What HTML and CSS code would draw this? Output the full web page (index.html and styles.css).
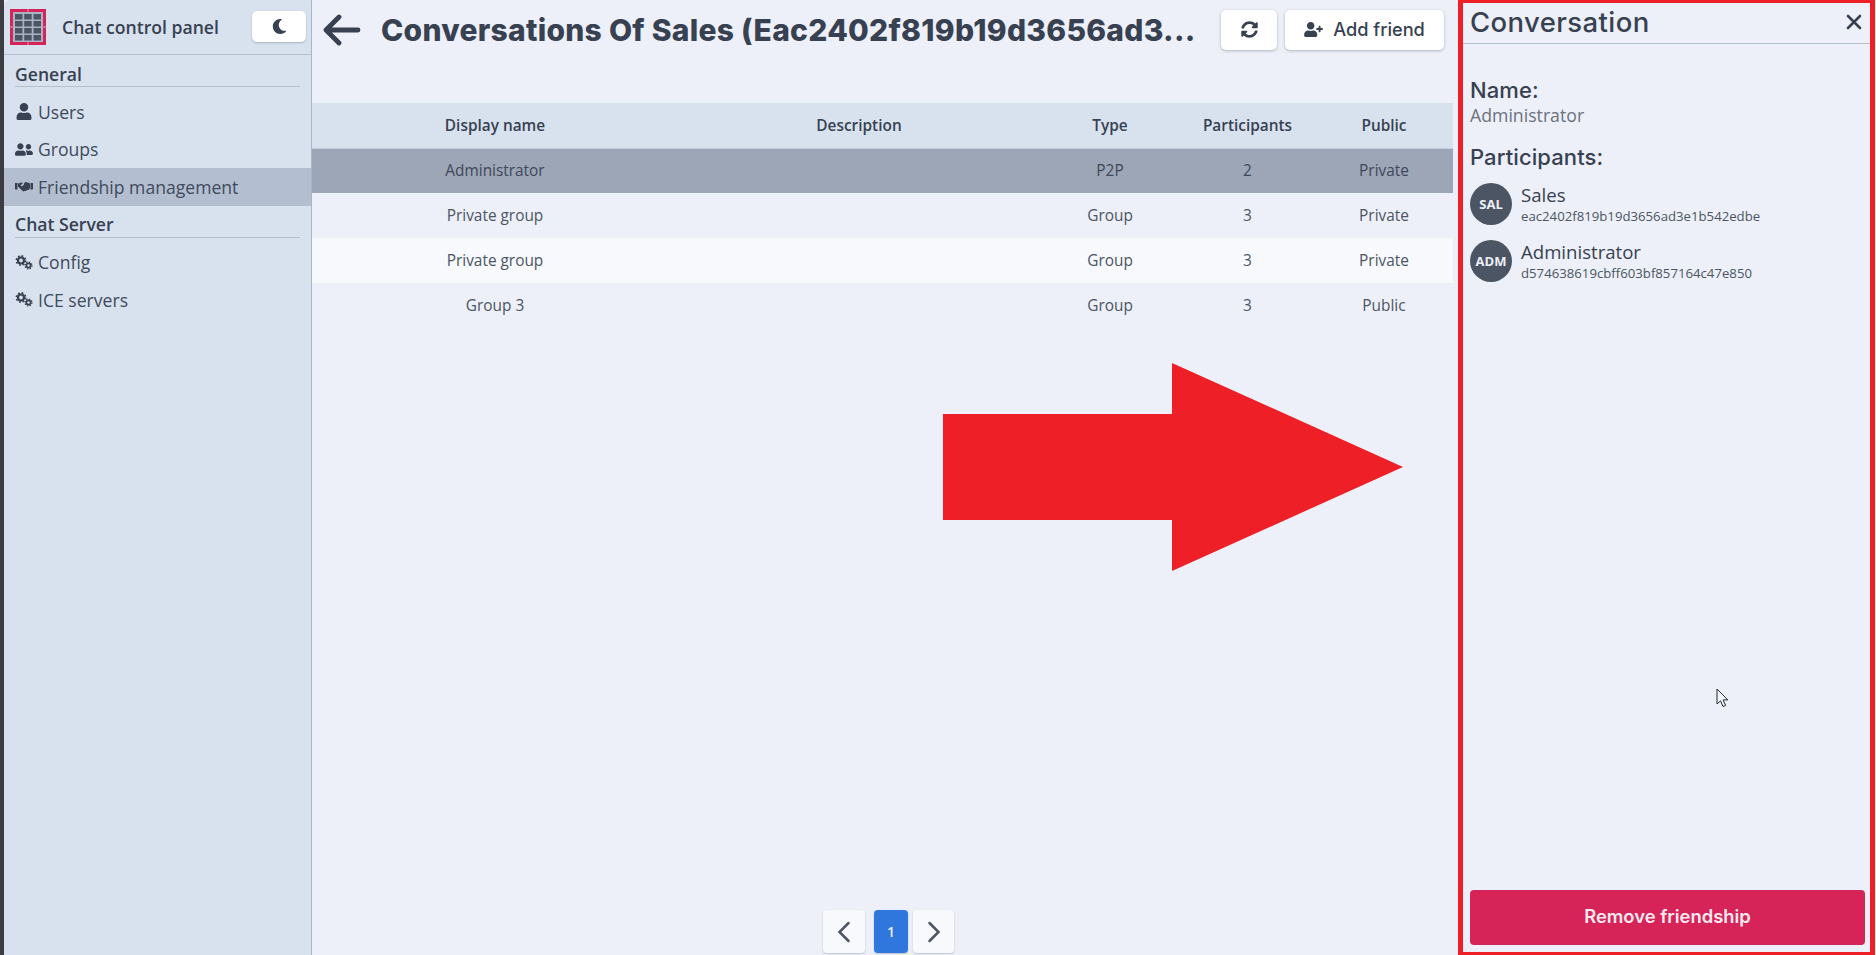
FILE: index.html
```html
<!DOCTYPE html>
<html lang="en">
<head>
<meta charset="utf-8">
<title>Chat control panel</title>
<link rel="stylesheet" href="styles.css">
</head>
<body>
<div class="app">
  <div class="strip"></div>
  <aside class="sidebar">
    <div class="brand">
      <svg class="logo" viewBox="0 0 36 36">
        <rect x="1.500" y="1.500" width="33" height="33" fill="#a9b3c4" stroke="#d62358" stroke-width="3"/>
        <path d="M18 0v3M18 33v3M0 18h3M33 18h3" stroke="#e9b9cb" stroke-width=".8"/>
        <g fill="#4b5563">
          <rect x="5" y="5" width="7.500" height="5.500"/><rect x="14.200" y="5" width="7.500" height="5.500"/><rect x="23.500" y="5" width="7.500" height="5.500"/>
          <rect x="5" y="12" width="7.500" height="5.500"/><rect x="14.200" y="12" width="7.500" height="5.500"/><rect x="23.500" y="12" width="7.500" height="5.500"/>
          <rect x="5" y="19" width="7.500" height="5.500"/><rect x="14.200" y="19" width="7.500" height="5.500"/><rect x="23.500" y="19" width="7.500" height="5.500"/>
          <rect x="5" y="26" width="7.500" height="5.500"/><rect x="14.200" y="26" width="7.500" height="5.500"/><rect x="23.500" y="26" width="7.500" height="5.500"/>
        </g>
      </svg>
      <span class="brand-name">Chat control panel</span>
      <button class="theme-btn" type="button">
        <svg class="icon-moon" viewBox="0 0 512 512"><path d="M283.211 512c78.962 0 151.079-35.925 198.857-94.792 7.068-8.708-.639-21.43-11.562-19.35-124.203 23.654-238.262-71.576-238.262-196.954 0-72.222 38.662-138.635 101.498-174.394 9.686-5.512 7.25-20.197-3.756-22.23A258.156 258.156 0 0 0 283.211 0c-141.309 0-256 114.511-256 256 0 141.309 114.511 256 256 256z"/></svg>
      </button>
    </div>
    <div class="nav-title">General</div>
    <a class="nav-item">
      <svg class="nav-icon" viewBox="0 0 448 512"><path d="M224 256c70.700 0 128-57.300 128-128S294.700 0 224 0 96 57.300 96 128s57.300 128 128 128zm89.600 32h-16.700c-22.200 10.200-46.900 16-72.900 16s-50.600-5.800-72.900-16h-16.700C60.200 288 0 348.200 0 422.400V464c0 26.500 21.500 48 48 48h352c26.500 0 48-21.500 48-48v-41.600c0-74.200-60.200-134.400-134.400-134.400z"/></svg>
      <span>Users</span>
    </a>
    <a class="nav-item">
      <svg class="nav-icon" viewBox="0 0 640 512"><path d="M192 256c61.900 0 112-50.100 112-112S253.900 32 192 32 80 82.100 80 144s50.100 112 112 112zm76.800 32h-8.300c-20.800 10-43.900 16-68.500 16s-47.600-6-68.500-16h-8.300C51.600 288 0 339.600 0 403.200V432c0 26.500 21.500 48 48 48h288c26.500 0 48-21.500 48-48v-28.800c0-63.600-51.600-115.200-115.200-115.200zM480 256c53 0 96-43 96-96s-43-96-96-96-96 43-96 96 43 96 96 96zm48 32h-3.800c-13.900 4.800-28.600 8-44.200 8s-30.300-3.200-44.200-8H432c-20.400 0-39.200 5.900-55.700 15.400 24.400 26.300 39.700 61.200 39.700 99.800v38.400c0 2.200-.5 4.300-.6 6.400H592c26.500 0 48-21.500 48-48 0-61.900-50.100-112-112-112z"/></svg>
      <span>Groups</span>
    </a>
    <a class="nav-item active">
      <svg class="nav-icon" viewBox="0 0 36 24"><path d="M0 5h5v13H0zM31 5h5v13h-5zM6 6l7-2 3 1-5 5 2 2 6-4 9 8 1 1-2 2-3 0-2 2h-3l-2 1-3-2-8-8zM19 4l4-1 7 3v10l-2 1-8-8-3 1 2-6z"/></svg>
      <span>Friendship management</span>
    </a>
    <div class="nav-title">Chat Server</div>
    <a class="nav-item">
      <svg class="nav-icon" viewBox="0 0 18 16"><g fill="none"><circle class="gear-big" cx="6" cy="6" r="3"/><circle class="gear-big-teeth" cx="6" cy="6" r="4.600"/><circle class="gear-small" cx="13.500" cy="11" r="2.100"/><circle class="gear-small-teeth" cx="13.500" cy="11" r="3.400"/></g></svg>
      <span>Config</span>
    </a>
    <a class="nav-item">
      <svg class="nav-icon" viewBox="0 0 18 16"><g fill="none"><circle class="gear-big" cx="6" cy="6" r="3"/><circle class="gear-big-teeth" cx="6" cy="6" r="4.600"/><circle class="gear-small" cx="13.500" cy="11" r="2.100"/><circle class="gear-small-teeth" cx="13.500" cy="11" r="3.400"/></g></svg>
      <span>ICE servers</span>
    </a>
  </aside>

  <main class="content">
    <header class="topbar">
      <svg class="back" viewBox="0 0 38 32"><path d="M35 16H4M16 3 3 16l13 13" fill="none" stroke="#374151" stroke-width="4.800" stroke-linecap="round" stroke-linejoin="round"/></svg>
      <h1 class="title">Conversations Of Sales (Eac2402f819b19d3656ad3...</h1>
      <button class="btn btn-icon" type="button">
        <svg class="icon-sync" viewBox="0 0 512 512"><path d="M370.720 133.280C339.458 104.008 298.888 87.962 255.848 88c-77.458.068-144.328 53.178-162.791 126.850-1.344 5.363-6.122 9.150-11.651 9.150H24.103c-7.498 0-13.194-6.807-11.807-14.176C33.933 94.924 134.813 8 256 8c66.448 0 126.791 26.136 171.315 68.685L463.030 40.970C478.149 25.851 504 36.559 504 57.941V192c0 13.255-10.745 24-24 24H345.941c-21.382 0-32.090-25.851-16.971-40.971l41.750-41.749zM32 296h134.059c21.382 0 32.090 25.851 16.971 40.971l-41.750 41.750c31.262 29.273 71.835 45.319 114.876 45.280 77.418-.07 144.315-53.144 162.787-126.849 1.344-5.363 6.122-9.150 11.651-9.150h57.304c7.498 0 13.194 6.807 11.807 14.176C478.067 417.076 377.187 504 256 504c-66.448 0-126.791-26.136-171.315-68.685L48.970 471.030C33.851 486.149 8 475.441 8 454.059V320c0-13.255 10.745-24 24-24z"/></svg>
      </button>
      <button class="btn btn-add" type="button">
        <svg class="icon-add" viewBox="0 0 640 512"><path d="M624 208h-64v-64c0-8.800-7.200-16-16-16h-32c-8.800 0-16 7.200-16 16v64h-64c-8.800 0-16 7.200-16 16v32c0 8.800 7.200 16 16 16h64v64c0 8.800 7.200 16 16 16h32c8.800 0 16-7.200 16-16v-64h64c8.800 0 16-7.200 16-16v-32c0-8.800-7.200-16-16-16zm-400 48c70.700 0 128-57.300 128-128S294.700 0 224 0 96 57.300 96 128s57.300 128 128 128zm89.600 32h-16.700c-22.200 10.200-46.900 16-72.900 16s-50.600-5.800-72.900-16h-16.700C60.200 288 0 348.200 0 422.400V464c0 26.500 21.500 48 48 48h352c26.500 0 48-21.500 48-48v-41.600c0-74.200-60.200-134.400-134.400-134.400z"/></svg>
        <span>Add friend</span>
      </button>
    </header>

    <table class="grid">
      <colgroup>
        <col class="col-name"><col class="col-desc"><col class="col-type"><col class="col-part"><col class="col-pub">
      </colgroup>
      <thead>
        <tr><th>Display name</th><th>Description</th><th>Type</th><th>Participants</th><th>Public</th></tr>
      </thead>
      <tbody>
        <tr class="selected"><td>Administrator</td><td></td><td>P2P</td><td>2</td><td>Private</td></tr>
        <tr><td>Private group</td><td></td><td>Group</td><td>3</td><td>Private</td></tr>
        <tr class="hover"><td>Private group</td><td></td><td>Group</td><td>3</td><td>Private</td></tr>
        <tr><td>Group 3</td><td></td><td>Group</td><td>3</td><td>Public</td></tr>
      </tbody>
    </table>

    <nav class="pager">
      <button class="page page-arrow" type="button"><svg viewBox="0 0 14 22"><path d="M11.500 2 2.500 11l9 9" fill="none" stroke="#4b5563" stroke-width="2.500" stroke-linecap="round"/></svg></button>
      <button class="page page-num" type="button">1</button>
      <button class="page page-arrow page-next" type="button"><svg viewBox="0 0 14 22"><path d="M2.500 2l9 9-9 9" fill="none" stroke="#4b5563" stroke-width="2.500" stroke-linecap="round"/></svg></button>
    </nav>
  </main>

  <section class="panel">
    <div class="panel-head">
      <h2 class="panel-title">Conversation</h2>
      <svg class="close" viewBox="0 0 16 16"><path d="M2 2l12 12M14 2 2 14" stroke="#374151" stroke-width="2.600" stroke-linecap="round"/></svg>
    </div>
    <h3 class="label label-name">Name:</h3>
    <div class="value">Administrator</div>
    <h3 class="label label-part">Participants:</h3>
    <div class="person">
      <div class="avatar">SAL</div>
      <div class="person-text"><div class="person-name">Sales</div><div class="person-id">eac2402f819b19d3656ad3e1b542edbe</div></div>
    </div>
    <div class="person">
      <div class="avatar">ADM</div>
      <div class="person-text"><div class="person-name">Administrator</div><div class="person-id">d574638619cbff603bf857164c47e850</div></div>
    </div>
    <button class="remove" type="button">Remove friendship</button>
  </section>
</div>

<svg class="arrow" viewBox="0 0 460 208"><path d="M0 51H229V0L460 104 229 208V157H0Z" fill="#ee1f26"/></svg>
<svg class="cursor" viewBox="0 0 13 20"><path d="M1 1v15l3.500-3.200 2.500 5.700 2.600-1.100-2.500-5.500h4.700z" fill="#f4f6fb" stroke="#1f2937" stroke-width="1"/></svg>
</body>
</html>
```

FILE: styles.css
```css
* { box-sizing: border-box; }
html, body { margin: 0; height: 100%; }
body {
  position: relative;
  width: 1876px;
  height: 955px;
  overflow: hidden;
  background: #edf0f8;
  color: #374151;
  font-family: "Open Sans", "Noto Sans", sans-serif;
}
button { font-family: inherit; color: inherit; cursor: pointer; }
.app { display: flex; height: 955px; }
.strip { width: 4px; flex: none; background: #3b3d40; }

.sidebar {
  width: 308px;
  flex: none;
  background: #d8e2ef;
  border-right: 1px solid #aab6c8;
  border-top-left-radius: 6px;
}
.brand {
  display: flex;
  align-items: center;
  height: 55px;
  padding: 0 5px 1px 6px;
  border-bottom: 1px solid #b4bfce;
}
.logo { width: 36px; height: 36px; flex: none; }
.brand-name { margin-left: 16px; font-size: 17.600px; font-weight: 600; flex: 1; white-space: nowrap; }
.theme-btn {
  width: 54px;
  height: 31px;
  display: flex;
  align-items: center;
  justify-content: center;
  background: #fff;
  border: 0;
  border-radius: 5px;
  box-shadow: 0 1px 2px rgba(55, 65, 81, .3);
}
.icon-moon { width: 15px; height: 15px; fill: #374151; }
.nav-title {
  margin: 0 11px;
  height: 32px;
  padding: 8px 0 0;
  font-size: 17.600px;
  line-height: 23px;
  font-weight: 600;
  border-bottom: 1px solid #b4bfce;
}
.nav-item + .nav-title { padding-top: 7px; }
.nav-item {
  display: flex;
  align-items: center;
  height: 37.500px;
  padding-left: 11px;
  font-size: 17.600px;
  color: #3f4a5a;
}
.nav-title + .nav-item { margin-top: 6px; }
.nav-item.active { background: #b3bfd1; }
.nav-icon { width: 18px; height: 17px; flex: none; margin-right: 5px; fill: #374151; }
.gear-big { stroke: #374151; stroke-width: 2.200; }
.gear-big-teeth { stroke: #374151; stroke-width: 1.700; stroke-dasharray: 1.800 1.810; }
.gear-small { stroke: #374151; stroke-width: 1.700; }
.gear-small-teeth { stroke: #374151; stroke-width: 1.400; stroke-dasharray: 1.335 1.335; }

.content { width: 1146px; flex: none; display: flex; flex-direction: column; position: relative; }
.topbar { display: flex; align-items: center; height: 103px; padding: 10px 14px 54px 11px; }
.back { width: 38px; height: 32px; flex: none; }
.title {
  flex: 1;
  min-width: 0;
  margin: 0 22px 0 20px;
  font-family: Inter, "Open Sans", sans-serif;
  font-size: 30px;
  letter-spacing: .27px;
  font-weight: 800;
  line-height: 40px;
  white-space: nowrap;
}
.btn {
  height: 40px;
  display: flex;
  align-items: center;
  justify-content: center;
  background: #fff;
  border: 0;
  border-radius: 5px;
  box-shadow: 0 1px 3px rgba(55, 65, 81, .35);
}
.btn-icon { width: 56px; flex: none; }
.btn-add { width: 159px; flex: none; margin-left: 8px; font-size: 18.200px; font-weight: 500; font-family: Inter, sans-serif; }
.btn-add span { margin-top: -2px; }
.icon-sync { width: 17px; height: 17px; fill: #374151; }
.icon-add { width: 19px; height: 15px; margin-right: 10px; fill: #374151; }

.grid { width: 1141px; table-layout: fixed; border-collapse: collapse; }
.col-name { width: 366px; }
.col-desc { width: 362px; }
.col-type { width: 140px; }
.col-part { width: 135px; }
.col-pub { width: 138px; }
.grid th, .grid td { height: 45px; padding: 0; text-align: center; font-size: 15.400px; }
.grid th { font-weight: 600; background: #d8e2ef; border-bottom: 1px solid #c3cedd; }
.grid td { color: #4b5563; }
.grid .selected td { background: #9ca6b7; color: #3f4858; }
.grid .hover td { background: #f7f9fd; }

.pager { position: absolute; left: 511px; bottom: 2px; display: flex; }
.page {
  height: 43px;
  padding: 0;
  border: 0;
  border-radius: 4px;
  background: #f7f9fd;
  box-shadow: 0 1px 2px rgba(55, 65, 81, .25);
  display: flex;
  align-items: center;
  justify-content: center;
}
.page svg { width: 14px; height: 22px; }
.page-arrow { width: 42px; }
.page-num { width: 34px; margin-left: 9px; background: #2f77dc; color: #e9f0fb; font-size: 14px; font-weight: 600; }
.page-next { width: 41px; margin-left: 5px; }

.panel {
  flex: none;
  width: 417px;
  height: 955px;
  padding: 0 5px 0 7px;
  border: solid #ee1f26;
  border-width: 3px 5px 3px 5px;
  background: #edf0f8;
  display: flex;
  flex-direction: column;
}
.panel-head {
  display: flex;
  align-items: center;
  justify-content: space-between;
  flex: none;
  height: 41px;
  margin: 0 -5px 0 -7px;
  padding: 0 8px 3px 7px;
  border-bottom: 1px solid #b4bfce;
}
.panel-title { margin: 0; font-family: Inter, sans-serif; font-size: 27.500px; letter-spacing: .4px; font-weight: 500; }
.close { width: 16px; height: 16px; }
.label { margin: 0; font-family: Inter, sans-serif; font-size: 22px; letter-spacing: .1px; font-weight: 500; line-height: 26px; }
.label-name { margin-top: 33px; }
.value { font-size: 17.700px; line-height: 25px; color: #6b7280; }
.label-part { margin-top: 16px; margin-bottom: 13px; }
.person { display: flex; align-items: center; height: 42px; margin-bottom: 15px; flex: none; }
.avatar {
  width: 42px;
  height: 42px;
  flex: none;
  border-radius: 50%;
  background: #4b5563;
  color: #edf0f8;
  font-size: 13px;
  font-weight: 700;
  display: flex;
  align-items: center;
  justify-content: center;
}
.person-text { margin-left: 9px; }
.person-name { font-size: 18.600px; font-weight: 500; line-height: 24px; }
.person-id { font-size: 13.200px; line-height: 18px; color: #4b5563; }
.remove {
  margin-top: auto;
  margin-bottom: 7px;
  width: 395px;
  height: 55px;
  flex: none;
  padding: 0 0 3px;
  border: 0;
  border-radius: 4px;
  background: #d62358;
  color: #f7e9ef;
  font-family: Inter, sans-serif;
  font-size: 18.400px;
  font-weight: 600;
}

.arrow { position: absolute; left: 943px; top: 363px; width: 460px; height: 208px; }
.cursor { position: absolute; left: 1716px; top: 688px; width: 13px; height: 20px; }
```
